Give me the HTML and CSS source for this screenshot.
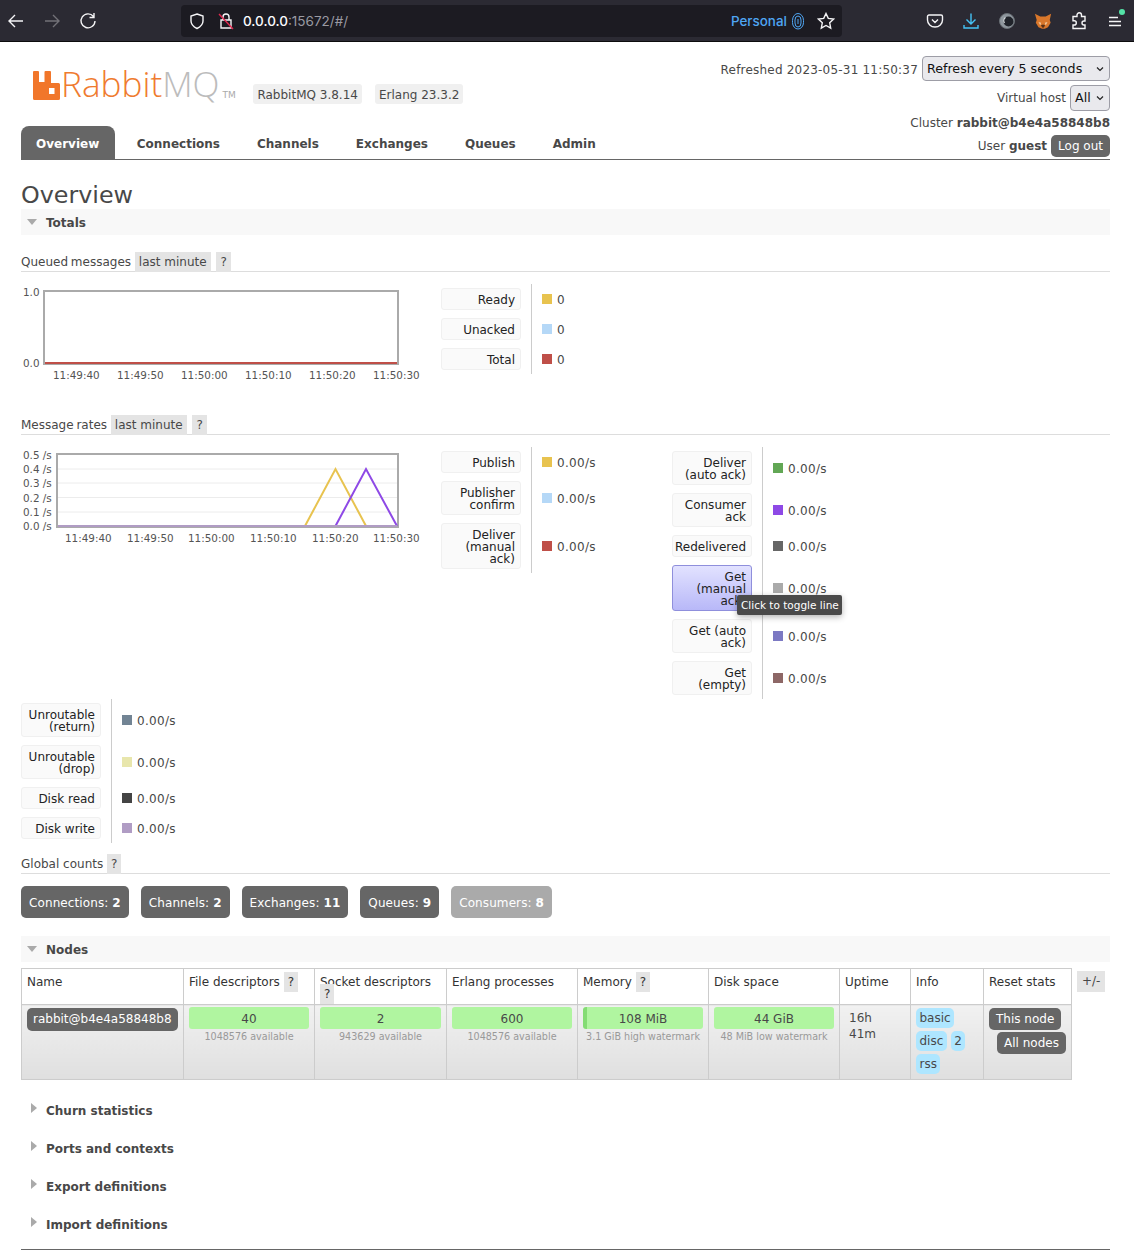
FILE: index.html
```html
<!DOCTYPE html>
<html lang="en">
<head>
<meta charset="utf-8">
<title>RabbitMQ Management</title>
<link rel="stylesheet" href="styles.css">
</head>
<body>
<div class="chrome">
  <div class="nav-icons">
    <svg class="ic" viewBox="0 0 18 18"><path d="M16 9H2M8 3L2 9l6 6"/></svg>
    <svg class="ic dim" viewBox="0 0 18 18"><path d="M2 9h14M10 3l6 6-6 6"/></svg>
    <svg class="ic" viewBox="0 0 18 18"><path d="M14.5 4.5A7 7 0 1 0 16 9M15 1v4.5h-4.5"/></svg>
  </div>
  <div class="urlbar">
    <svg class="ic shield" viewBox="0 0 18 18"><path d="M9 2l6 2v5c0 4-3 6-6 7.500C6 15 3 13 3 9V4z"/></svg>
    <svg class="ic lock" viewBox="0 0 18 18"><path d="M6 8V5a3 3 0 0 1 6 0v3M4 8h10v8H4z"/><path class="slash" d="M2 2l14 15"/></svg>
    <span class="url"><b>0.0.0.0</b>:15672/#/</span>
    <span class="personal">Personal</span>
    <svg class="ic finger" viewBox="0 0 14 18"><path d="M7 1.500a5.500 7 0 0 1 5.500 7v2a5.500 6.500 0 0 1-11 0v-2a5.500 7 0 0 1 5.500-7zM7 4a3 4 0 0 1 3 4v3a3 4 0 0 1-6 0V8a3 4 0 0 1 3-4zM7 7v5"/></svg>
    <svg class="ic star" viewBox="0 0 18 18"><path d="M9 1.500l2.300 4.900 5.300.7-3.900 3.700 1 5.300L9 13.500l-4.700 2.600 1-5.300-3.900-3.700 5.300-.7z"/></svg>
  </div>
  <div class="tool-icons">
    <svg class="ic" viewBox="0 0 18 18"><path d="M3 3h12a1.500 1.500 0 0 1 1.500 1.500V8a7.500 7 0 0 1-15 0V4.500A1.500 1.500 0 0 1 3 3zM6 7.500l3 3 3-3"/></svg>
    <svg class="ic blue" viewBox="0 0 18 18"><path d="M9 1.500v10M4.500 7.500L9 12l4.500-4.500M2 13v3h14v-3"/></svg>
    <svg class="ic" viewBox="0 0 18 18"><circle class="orb" cx="9" cy="9" r="7.500"/><circle class="orb-in" cx="10.500" cy="9.500" r="5"/><path class="orb-hi" d="M6.500 11a4 4 0 0 1 1-5.500"/></svg>
    <svg class="ic" viewBox="0 0 20 18"><path class="fox" d="M1 1l6 3h6l6-3-1.500 7 1 3-3 5-3.500 1.500h-3L5 16l-3-5 1-3z"/><path class="fox-l" d="M5 10l3 1-1 3zM15 10l-3 1 1 3z"/><path class="fox-d" d="M7.500 14L10 17l2.500-3L10 13z"/></svg>
    <svg class="ic" viewBox="0 0 18 18"><path d="M7 3a2.200 2.200 0 0 1 4.500 0v1.500H15V9h-1a2 2 0 0 0 0 4h1v3.500H3V13h1.200a2.100 2.100 0 0 0 0-4.200H3V4.500h4z"/></svg>
    <div class="menu"><svg class="ic" viewBox="0 0 18 18"><path d="M3 5.500h9M3 9.500h12M3 13.500h12"/></svg><i class="dot"></i></div>
  </div>
</div>

<div class="page">
  <header class="head">
    <div class="head-left">
      <div class="brand">
        <svg class="logo-mark" viewBox="0 0 27 29"><path d="M0 1a1 1 0 0 1 1-1h4a1 1 0 0 1 1 1v10h5.500V1a1 1 0 0 1 1-1H17a1 1 0 0 1 1 1v11h7.500A1.500 1.500 0 0 1 27 13.500v14a1.500 1.500 0 0 1-1.500 1.500h-24A1.500 1.500 0 0 1 0 27.500zM16 17v6h5.500v-6z" fill-rule="evenodd"/></svg>
        <span class="logo-text"><span class="logo-r">Rabbit</span><span class="logo-q">MQ</span></span><span class="logo-tm">TM</span>
        <span class="ver ver-first">RabbitMQ 3.8.14</span>
        <span class="ver">Erlang 23.3.2</span>
      </div>
      <nav class="tabs">
        <a class="tab active">Overview</a>
        <a class="tab">Connections</a>
        <a class="tab">Channels</a>
        <a class="tab">Exchanges</a>
        <a class="tab">Queues</a>
        <a class="tab">Admin</a>
      </nav>
    </div>
    <div class="status">
      <div class="st-row st-refresh"><span class="st-time">Refreshed 2023-05-31 11:50:37</span><span class="sel sel-wide">Refresh every 5 seconds<svg viewBox="0 0 8 6"><path d="M1 1.500l3 3 3-3"/></svg></span></div>
      <div class="st-row st-vhost"><span>Virtual host</span><span class="sel sel-small">All<svg viewBox="0 0 8 6"><path d="M1 1.500l3 3 3-3"/></svg></span></div>
      <div class="st-row st-cluster">Cluster <b>rabbit@b4e4a58848b8</b></div>
      <div class="st-row st-user">User <b>guest</b><span class="logout">Log out</span></div>
    </div>
  </header>

  <h1>Overview</h1>
  <h2 class="sec"><i class="tri-down"></i>Totals</h2>

  <h3 class="sub first-sub">Queued messages <span class="tag tag-range">last minute</span> <span class="tag tag-help">?</span></h3>
  <div class="chart-row">
    <svg class="chart" viewBox="21 284 420 100">
      <rect class="frame" x="44" y="291" width="354" height="73"/>
      <path class="l-red" d="M45 363H397"/>
      <text class="tick" x="23" y="296">1.0</text>
      <text class="tick" x="23" y="367">0.0</text>
      <text class="tick" x="53" y="379">11:49:40</text>
      <text class="tick" x="117" y="379">11:49:50</text>
      <text class="tick" x="181" y="379">11:50:00</text>
      <text class="tick" x="245" y="379">11:50:10</text>
      <text class="tick" x="309" y="379">11:50:20</text>
      <text class="tick" x="373" y="379">11:50:30</text>
    </svg>
    <div class="legend">
      <div class="lrow"><div class="lw"><div class="lab">Ready</div></div><div class="val"><i class="sw c-yellow"></i>0</div></div>
      <div class="lrow"><div class="lw"><div class="lab">Unacked</div></div><div class="val"><i class="sw c-lblue"></i>0</div></div>
      <div class="lrow"><div class="lw"><div class="lab">Total</div></div><div class="val"><i class="sw c-red"></i>0</div></div>
    </div>
  </div>

  <h3 class="sub rates-sub">Message rates <span class="tag tag-range">last minute</span> <span class="tag tag-help">?</span></h3>
  <div class="chart-row">
    <svg class="chart" viewBox="21 447 420 100">
      <path class="grid" d="M57 469H398M57 483H398M57 497.500H398M57 512H398"/>
      <rect class="frame" x="57" y="454" width="341" height="73"/>
      <path class="l-yellow" d="M305 526L335.500 469L366 526"/>
      <path class="l-purple" d="M335.500 526L366 469L397 526"/>
      <path class="l-lilac" d="M58 526H397"/>
      <text class="tick" x="23" y="459">0.5 /s</text>
      <text class="tick" x="23" y="473">0.4 /s</text>
      <text class="tick" x="23" y="487">0.3 /s</text>
      <text class="tick" x="23" y="502">0.2 /s</text>
      <text class="tick" x="23" y="516">0.1 /s</text>
      <text class="tick" x="23" y="530">0.0 /s</text>
      <text class="tick" x="65" y="542">11:49:40</text>
      <text class="tick" x="127" y="542">11:49:50</text>
      <text class="tick" x="188" y="542">11:50:00</text>
      <text class="tick" x="250" y="542">11:50:10</text>
      <text class="tick" x="312" y="542">11:50:20</text>
      <text class="tick" x="373" y="542">11:50:30</text>
    </svg>
    <div class="legend">
      <div class="lrow"><div class="lw"><div class="lab">Publish</div></div><div class="val"><i class="sw c-yellow"></i>0.00/s</div></div>
      <div class="lrow"><div class="lw"><div class="lab">Publisher confirm</div></div><div class="val"><i class="sw c-lblue"></i>0.00/s</div></div>
      <div class="lrow"><div class="lw"><div class="lab">Deliver (manual ack)</div></div><div class="val"><i class="sw c-red"></i>0.00/s</div></div>
    </div>
    <div class="legend">
      <div class="lrow"><div class="lw"><div class="lab">Deliver (auto ack)</div></div><div class="val"><i class="sw c-green"></i>0.00/s</div></div>
      <div class="lrow"><div class="lw"><div class="lab">Consumer ack</div></div><div class="val"><i class="sw c-purple"></i>0.00/s</div></div>
      <div class="lrow"><div class="lw"><div class="lab">Redelivered</div></div><div class="val"><i class="sw c-dgrey"></i>0.00/s</div></div>
      <div class="lrow"><div class="lw tip-anchor"><div class="lab hover">Get (manual ack)</div><div class="tooltip">Click to toggle line</div></div><div class="val"><i class="sw c-grey"></i>0.00/s</div></div>
      <div class="lrow"><div class="lw"><div class="lab">Get (auto ack)</div></div><div class="val"><i class="sw c-indigo"></i>0.00/s</div></div>
      <div class="lrow"><div class="lw"><div class="lab">Get (empty)</div></div><div class="val"><i class="sw c-brown"></i>0.00/s</div></div>
    </div>
    <div class="legend">
      <div class="lrow"><div class="lw"><div class="lab">Unroutable (return)</div></div><div class="val"><i class="sw c-slate"></i>0.00/s</div></div>
      <div class="lrow"><div class="lw"><div class="lab">Unroutable (drop)</div></div><div class="val"><i class="sw c-pale"></i>0.00/s</div></div>
      <div class="lrow"><div class="lw"><div class="lab">Disk read</div></div><div class="val"><i class="sw c-char"></i>0.00/s</div></div>
      <div class="lrow"><div class="lw"><div class="lab">Disk write</div></div><div class="val"><i class="sw c-lilac"></i>0.00/s</div></div>
    </div>
  </div>

  <h3 class="sub counts-sub">Global counts <span class="tag">?</span></h3>
  <div class="counts">
    <a class="count">Connections: <b>2</b></a>
    <a class="count">Channels: <b>2</b></a>
    <a class="count">Exchanges: <b>11</b></a>
    <a class="count">Queues: <b>9</b></a>
    <a class="count off">Consumers: <b>8</b></a>
  </div>

  <h2 class="sec nodes-sec"><i class="tri-down"></i>Nodes</h2>
  <div class="nodes-wrap">
    <table class="nodes">
      <colgroup>
        <col class="w-name"><col class="w-stat"><col class="w-stat2"><col class="w-stat"><col class="w-stat"><col class="w-stat"><col class="w-up"><col class="w-info"><col class="w-reset">
      </colgroup>
      <thead>
        <tr>
          <th>Name</th>
          <th>File descriptors <span class="tag">?</span></th>
          <th>Socket descriptors <span class="tag">?</span></th>
          <th>Erlang processes</th>
          <th>Memory <span class="tag">?</span></th>
          <th>Disk space</th>
          <th>Uptime</th>
          <th>Info</th>
          <th>Reset stats</th>
        </tr>
      </thead>
      <tbody>
        <tr>
          <td><a class="nodename">rabbit@b4e4a58848b8</a></td>
          <td><div class="bar">40</div><div class="barsub">1048576 available</div></td>
          <td><div class="bar">2</div><div class="barsub">943629 available</div></td>
          <td><div class="bar">600</div><div class="barsub">1048576 available</div></td>
          <td><div class="bar bar-mem">108 MiB</div><div class="barsub">3.1 GiB high watermark</div></td>
          <td><div class="bar">44 GiB</div><div class="barsub">48 MiB low watermark</div></td>
          <td class="uptime">16h<br>41m</td>
          <td class="info"><span class="pill">basic</span><br><span class="pill">disc</span> <span class="pill">2</span><br><span class="pill">rss</span></td>
          <td class="reset"><a class="rbtn">This node</a><a class="rbtn rbtn-all">All nodes</a></td>
        </tr>
      </tbody>
    </table>
    <span class="tag plus">+/-</span>
  </div>

  <h2 class="sec closed first-closed"><i class="tri-right"></i>Churn statistics</h2>
  <h2 class="sec closed"><i class="tri-right"></i>Ports and contexts</h2>
  <h2 class="sec closed"><i class="tri-right"></i>Export definitions</h2>
  <h2 class="sec closed"><i class="tri-right"></i>Import definitions</h2>
  <div class="footer"></div>
</div>
</body>
</html>
```
FILE: styles.css
```css
html, body { margin: 0; padding: 0; background: #fff; }
body { font: 12px/12px "DejaVu Sans", Verdana, sans-serif; color: #484848; width: 1134px; overflow-x: hidden; }
a { display: inline-block; }

/* browser chrome */
.chrome { height: 41px; background: #2b2a33; border-bottom: 1px solid #0c0c0d; display: flex; align-items: center; box-sizing: content-box; position: relative; font-family: Inter, "Liberation Sans", sans-serif; }
.ic { width: 18px; height: 18px; fill: none; stroke: #f5f5f7; stroke-width: 1.400; display: block; }
.nav-icons { display: flex; gap: 18px; margin-left: 7px; width: 174px; }
.dim { opacity: .35; }
.urlbar { width: 661px; height: 32px; background: #1c1b22; border-radius: 4px; display: flex; align-items: center; padding-left: 7px; box-sizing: border-box; }
.lock { margin-left: 11px; }
.slash { stroke: #e22850; }
.url { margin-left: 8px; font-size: 13.500px; color: #9a9aa2; width: 488px; }
.url b { font-weight: 500; color: #fbfbfe; }
.personal { color: #4fa6f3; font-size: 13.400px; font-weight: 500; width: 56px; }
.finger { width: 14px; stroke: #4fa6f3; stroke-width: 1; margin-left: 4px; }
.star { margin-left: 12px; }
.tool-icons { display: flex; gap: 18px; margin-left: 84px; }
.blue { stroke: #45c3f5; }
.orb { fill: #8f979e; stroke: #6a7076; stroke-width: 1; }
.orb-in { fill: #20232a; stroke: none; }
.orb-hi { stroke: #d8dde0; stroke-width: 1.200; }
.fox { fill: #d9772b; stroke: none; }
.fox-l { fill: #f0c9a0; stroke: none; }
.fox-d { fill: #5a3218; stroke: none; }
.menu { position: relative; }
.dot { position: absolute; width: 6px; height: 6px; border-radius: 50%; background: #54e3a7; right: -1px; top: -3px; }

/* page */
.page { padding: 0 24px 0 21px; }
.head { display: flex; justify-content: space-between; border-bottom: 1px solid #666; height: 118px; box-sizing: border-box; }
.brand { display: flex; align-items: flex-start; height: 84px; padding-left: 12px; }
.logo-mark { width: 27px; height: 29px; fill: #f1762a; margin-top: 29px; flex: none; }
.logo-text { font: 300 35.200px/37px "Open Sans", sans-serif; margin-top: 23px; margin-left: 1px; }
.logo-r { color: #ef7b2f; }
.logo-q { color: #bcbcbc; }
.logo-tm { font: 9px/9px "DejaVu Sans", sans-serif; color: #aaa; margin-top: 49px; margin-left: 3px; width: 16px; }
.ver { background: #f0f0f0; border-radius: 3px; padding: 5px 4px 3px; margin-top: 42px; line-height: 12px; }
.ver-first { margin-left: 15px; margin-right: 13px; }
.tabs { display: flex; gap: 7px; align-items: flex-end; }
.tab { font-weight: bold; padding: 12px 15px 9px; }
.tab.active { background: #666; color: #fff; border-radius: 8px 8px 0 0; padding-right: 15.500px; }
.status { display: flex; flex-direction: column; align-items: flex-end; }
.st-row { display: flex; align-items: center; gap: 4px; white-space: pre; box-sizing: border-box; }
.st-time { letter-spacing: .2px; }
.st-refresh { margin-top: 14px; height: 25px; padding-top: 2px; }
.st-refresh .sel { margin-top: -2px; padding-top: 1px; }
.st-vhost { margin-top: 4px; height: 26px; }
.st-cluster { margin-top: 6px; height: 12px; gap: 0; }
.st-user { margin-top: 6px; height: 22px; gap: 0; }
.sel { background: #e9e9ed; border: 1px solid #9d9da6; border-radius: 4px; color: #111; height: 25px; display: flex; align-items: center; justify-content: space-between; padding: 0 5px 0 4px; box-sizing: border-box; font-size: 12.650px; }
.sel svg { width: 8px; height: 6px; fill: none; stroke: #222; stroke-width: 1.200; }
.sel-wide { width: 188px; }
.sel-small { width: 40px; height: 26px; }
.logout { background: #666; color: #fff; border-radius: 5px; padding: 5px 7px; margin-left: 4px; }

h1 { font-size: 23.800px; line-height: 28px; font-weight: normal; margin: 21px 0 0; color: #484848; }
.sec { font-size: 12px; line-height: 26px; height: 26px; margin: 0; background: #f8f8f8; font-weight: bold; display: flex; align-items: center; padding: 2px 0 0 25px; position: relative; box-sizing: border-box; }
.tri-down { position: absolute; left: 6px; top: 10px; border: solid transparent; border-width: 6px 5.500px 0; border-top-color: #aaa; }
.tri-right { position: absolute; left: 10px; top: 6px; border: solid transparent; border-width: 5.500px 0 5.500px 6px; border-left-color: #aaa; }
.closed { background: none; margin-top: 12px; }
.first-closed { margin-top: 17px; }
.nodes-sec { margin-top: 18px; }

.sub { font-size: 12px; font-weight: normal; margin: 0; height: 20px; line-height: 23px; border-bottom: 1px solid #ddd; }
.first-sub { margin-top: 16px; word-spacing: -1px; }
.rates-sub { margin-top: 30px; word-spacing: -1px; }
.counts-sub { margin-top: 10px; }
.tag { background: #e4e4e4; padding: 3px 4px; line-height: 12px; word-spacing: 0; }
.tag-range { margin-left: 1px; }
.tag-help { margin-left: 3px; }

.chart-row { display: flex; flex-wrap: wrap; margin-top: 12px; }
.chart { width: 420px; height: 100px; flex: none; }
.frame { fill: none; stroke: #aaa; stroke-width: 2; }
.grid { stroke: #ececec; stroke-width: 1; fill: none; }
.tick { font: 10.400px "DejaVu Sans", sans-serif; fill: #545454; }
.l-red, .l-yellow, .l-purple, .l-lilac { fill: none; stroke-width: 2; }
.l-red { stroke: #bf4f48; }
.l-yellow { stroke: #e8c34f; }
.l-purple { stroke: #8e49e6; }
.l-lilac { stroke: #b09cc4; }

.legend { width: 231px; flex: none; }
.lrow { display: flex; }
.lw { width: 90px; padding: 4px 10px 4px 0; box-sizing: border-box; flex: none; }
.lab { width: 80px; box-sizing: border-box; padding: 5px 5px 3px 2px; background: #fafafa; border: 1px solid #f0f0f0; border-radius: 3px; text-align: right; color: #222; }
.hover { background: linear-gradient(#e2e2ff, #b8b8f8); border-color: #8f8fdc; }
.val { border-left: 1px solid #ccc; display: flex; align-items: center; padding: 2px 0 0 10px; flex: 1; letter-spacing: .3px; }
.sw { width: 10px; height: 10px; margin: -2px 5px 0 0; flex: none; }
.c-yellow { background: #e8c34f; }
.c-lblue { background: #b5d8f7; }
.c-red { background: #bf4f48; }
.c-green { background: #62a755; }
.c-purple { background: #8e49e6; }
.c-dgrey { background: #666; }
.c-grey { background: #aaa; }
.c-indigo { background: #7c79c3; }
.c-brown { background: #8d6766; }
.c-slate { background: #728494; }
.c-pale { background: #e8e6ac; }
.c-char { background: #444; }
.c-lilac { background: #b09cc4; }
.tip-anchor { position: relative; }
.tooltip { position: absolute; left: 65px; top: 34px; z-index: 2; background: #4a4a4a; color: #fff; font-size: 10.500px; padding: 4px 3px 4px 4px; white-space: nowrap; box-shadow: 0 2px 6px rgba(0,0,0,.3); border-radius: 2px; }

.counts { display: flex; gap: 12px; margin-top: 12px; }
.count { background: #666; color: #fff; padding: 11px 8px 9px; border-radius: 5px; letter-spacing: .1px; }
.count.off { background: #aaa; }

.nodes-wrap { display: flex; align-items: flex-start; margin-top: 6px; }
.nodes { border-collapse: collapse; table-layout: fixed; width: 1050px; }
.w-name { width: 162px; }
.w-stat { width: 131px; }
.w-stat2 { width: 132px; }
.w-up { width: 71px; }
.w-info { width: 73px; }
.w-reset { width: 88px; }
.nodes th { font-weight: normal; text-align: left; border: 1px solid #ccc; height: 35px; box-sizing: border-box; padding: 7px 5px 4px; vertical-align: top; color: #333; background: #fff; }
.nodes td { border: 1px solid #ccc; padding: 2px 5px; vertical-align: top; height: 75px; box-sizing: border-box; background: linear-gradient(#f1f1f1, #dfdfdf); }
.nodename { background: #666; color: #fff; border-radius: 5px; padding: 5px 6px 6px; margin-top: 1px; line-height: 12px; }
.bar { background: #b0f5a0; border-radius: 3px; height: 22px; line-height: 24px; text-align: center; }
.bar-mem { background: linear-gradient(90deg, #84dc74 4px, #b0f5a0 4px); }
.barsub { font-size: 9.600px; line-height: 14px; margin-top: 1px; color: #999; text-align: center; white-space: nowrap; margin-left: -4px; margin-right: -4px; }
.nodes .uptime { line-height: 16px; padding-left: 9px; padding-top: 5px; }
.nodes .info { padding-left: 5px; line-height: 23px; }
.pill { background: #aee6ff; border-radius: 5px; padding: 3px 3.500px; line-height: 14px; }
.nodes .reset { padding-top: 3px; }
.rbtn { display: block; width: fit-content; background: #666; color: #fff; border-radius: 5px; padding: 5px 7px; }
.rbtn-all { margin: 2px 0 0 8px; }
.plus { margin: 3px 0 0 5px; padding: 4px 5px 5px; }
.footer { border-top: 1px solid #666; margin-top: 12px; }
```
